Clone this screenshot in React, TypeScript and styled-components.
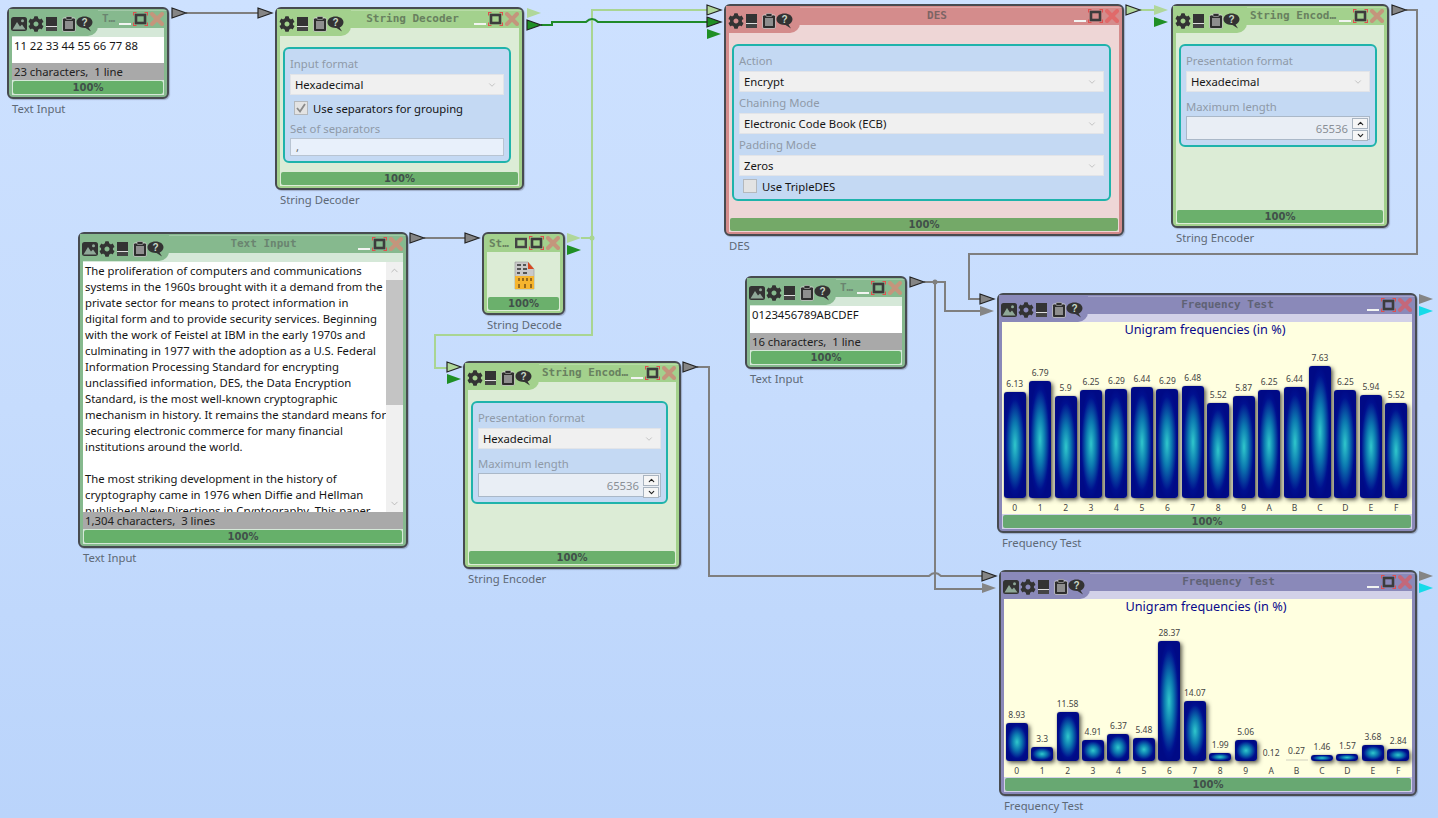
import React from 'react';
import styled, { createGlobalStyle } from 'styled-components';
import { FaCog } from 'react-icons/fa';
import { ChevronDown, ChevronUp } from 'lucide-react';

const UI = '"Noto Sans", "Open Sans", sans-serif';

const Global = createGlobalStyle`
  html, body { margin: 0; padding: 0; height: 100%; overflow: hidden; }
  body { font-family: ${UI}; font-size: 11.3px; color: #111; }
`;

type Tone = 'text' | 'codec' | 'cipher' | 'stats';
const tones: Record<Tone, { frame: string; pale: string; bar: string; title: string; close: string }> = {
  text: { frame: '#86b98e', pale: '#d5e8d8', bar: '#66b06a', title: '#6a8470', close: '#c4957c' },
  codec: { frame: '#a3d18d', pale: '#dcecd6', bar: '#6bb06c', title: '#68805f', close: '#c4957c' },
  cipher: { frame: '#d48c8c', pale: '#eed6d6', bar: '#74a968', title: '#7d6464', close: '#e06a6a' },
  stats: { frame: '#8a89b9', pale: '#d2d1e8', bar: '#68a872', title: '#5f6275', close: '#c4687a' },
};

const Canvas = styled.div`
  position: relative;
  width: 1438px;
  height: 818px;
  overflow: hidden;
  background: linear-gradient(180deg, #cde1ff 0%, #c6dcfd 50%, #bad4fb 100%);
`;
const Wires = styled.svg`
  position: absolute;
  left: 0;
  top: 0;
  width: 1438px;
  height: 818px;
`;
const NodeWrap = styled.div<{ $x: number; $y: number; $w: number }>`
  position: absolute;
  left: ${p => p.$x}px;
  top: ${p => p.$y}px;
  width: ${p => p.$w}px;
  display: flex;
  flex-direction: column;
`;
const Win = styled.div<{ $h: number; $tone: Tone }>`
  box-sizing: border-box;
  height: ${p => p.$h}px;
  border: 2px solid #474b50;
  border-radius: 6px;
  background: ${p => tones[p.$tone].frame};
  display: flex;
  flex-direction: column;
  padding-bottom: 2px;
  box-shadow: 1px 1px 1px rgba(60, 60, 80, 0.3);
`;
const NodeLabel = styled.div`
  margin: 2px 0 0 5px;
  height: 16px;
  line-height: 16px;
  color: #5e6976;
  white-space: nowrap;
`;
const Header = styled.div`
  display: flex;
  height: 27px;
  flex: none;
`;
const Tab = styled.div<{ $tone: Tone; $w: number }>`
  box-sizing: border-box;
  width: ${p => p.$w}px;
  height: 27px;
  flex: none;
  display: flex;
  align-items: center;
  padding: 3px 0 0 2px;
  background: ${p => tones[p.$tone].frame};
  border-bottom-right-radius: 10px;
  position: relative;
  z-index: 1;
`;
const IconGap = styled.span<{ $w: number }>`
  width: ${p => p.$w}px;
  flex: none;
`;
const HeaderRest = styled.div`
  flex: 1;
  min-width: 0;
  display: flex;
  flex-direction: column;
`;
const TitleBar = styled.div`
  height: 19px;
  flex: none;
  display: flex;
  align-items: center;
  padding-right: 3px;
  background: linear-gradient(180deg, transparent 1px, rgba(255, 255, 255, 0.22) 1px, rgba(255, 255, 255, 0.22) 2px, transparent 2px);
`;
const Band = styled.div<{ $tone: Tone }>`
  height: 8px;
  margin: 0 3px 0 -12px;
  background: ${p => tones[p.$tone].pale};
`;
const Title = styled.div<{ $tone: Tone }>`
  flex: 1;
  min-width: 0;
  text-align: center;
  font: bold 11px "DejaVu Sans Mono", monospace;
  color: ${p => tones[p.$tone].title};
  white-space: nowrap;
`;
const WinButtons = styled.div`
  display: flex;
  align-items: center;
  gap: 2px;
  flex: none;
`;
const Body = styled.div<{ $tone: Tone }>`
  flex: 1;
  min-height: 0;
  margin: 0 3px;
  background: ${p => tones[p.$tone].pale};
  display: flex;
  flex-direction: column;
`;
const Footer = styled.div`
  flex: none;
  padding: 1px;
`;
const Spacer = styled.div`
  flex: 1;
`;
const Progress = styled.div<{ $tone: Tone }>`
  height: 13px;
  border-radius: 2px;
  background: ${p => tones[p.$tone].bar};
  text-align: center;
  font: bold 10px/13px "DejaVu Sans", sans-serif;
  color: #41504a;
`;
const Panel = styled.div<{ $w: number }>`
  box-sizing: border-box;
  width: ${p => p.$w}px;
  margin: 11px 0 0 3px;
  border: 2px solid #1fb3ab;
  border-radius: 6px;
  background: #c4d9f3;
  padding: 7px 5px 5px;
`;
const FieldLabel = styled.div<{ $gap?: number }>`
  height: 16px;
  line-height: 16px;
  margin-top: ${p => p.$gap ?? 0}px;
  color: #8f9aa8;
  white-space: nowrap;
`;
const Select = styled.div`
  box-sizing: border-box;
  height: 21px;
  margin-top: 2px;
  display: flex;
  align-items: center;
  justify-content: space-between;
  padding: 0 6px 0 4px;
  background: #f0f0f0;
  border: 1px solid #e2e4e8;
  color: #151515;
  svg { color: #a8a8a8; }
`;
const CheckRow = styled.div<{ $gap: number }>`
  display: flex;
  align-items: center;
  gap: 5px;
  height: 16px;
  margin-top: ${p => p.$gap}px;
  padding-left: 4px;
  color: #151515;
  white-space: nowrap;
`;
const CheckBox = styled.div`
  box-sizing: border-box;
  width: 14px;
  height: 14px;
  flex: none;
  background: #e3e3e3;
  border: 1px solid #b4b8bc;
  display: flex;
  align-items: center;
  justify-content: center;
`;
const SepInput = styled.div`
  box-sizing: border-box;
  height: 18px;
  margin-top: 1px;
  padding: 0 5px;
  line-height: 16px;
  background: #e8f0fb;
  border: 1px solid #b8c4d2;
  color: #666;
`;
const NumberField = styled.div`
  box-sizing: border-box;
  height: 24px;
  margin-top: 1px;
  display: flex;
  align-items: center;
  justify-content: flex-end;
  gap: 4px;
  padding-right: 1px;
  background: #e9eef5;
  border: 1px solid #aab8c8;
  color: #8a8f96;
`;
const Spinner = styled.div`
  width: 16px;
  height: 20px;
  display: flex;
  flex-direction: column;
  gap: 1px;
`;
const SpinButton = styled.div`
  flex: 1;
  background: #f6f6f6;
  border: 1px solid #a9b4c0;
  display: flex;
  align-items: center;
  justify-content: center;
  color: #222;
`;
const TextBox = styled.div`
  box-sizing: border-box;
  flex: 1;
  min-height: 0;
  margin-top: 1px;
  background: #fff;
  display: flex;
  overflow: hidden;
`;
const TextLines = styled.div`
  flex: 1;
  min-width: 0;
  padding: 1px 2px 0;
  line-height: 16px;
  white-space: pre;
  color: #151515;
  overflow: hidden;
`;
const ScrollBar = styled.div`
  width: 17px;
  flex: none;
  background: #f0f0f0;
  display: flex;
  flex-direction: column;
  align-items: stretch;
  justify-content: space-between;
`;
const ScrollEnd = styled.div`
  height: 17px;
  display: flex;
  align-items: center;
  justify-content: center;
  color: #a4a4a4;
`;
const ScrollThumb = styled.div`
  height: 125px;
  background: #c4c4c4;
  margin-bottom: 90px;
`;
const Status = styled.div`
  flex: none;
  height: 17px;
  line-height: 17px;
  padding: 0 2px;
  background: #a9a9a9;
  color: #222;
  white-space: pre;
`;
const MiniHeader = styled.div`
  display: flex;
  align-items: center;
  height: 18px;
  padding: 0 3px 0 5px;
  flex: none;
`;
const MiniTitle = styled.div<{ $tone: Tone }>`
  flex: 1;
  font: bold 11px "DejaVu Sans Mono", monospace;
  color: ${p => tones[p.$tone].title};
`;
const MiniBody = styled.div`
  flex: 1;
  display: flex;
  align-items: center;
  justify-content: center;
  padding-top: 3px;
`;
const ChartArea = styled.div`
  flex: 1;
  min-height: 0;
  background: #ffffe0;
  display: flex;
  flex-direction: column;
`;
const ChartTitle = styled.div`
  height: 16px;
  line-height: 16px;
  margin-top: -1px;
  padding: 0 4px 0 0;
  text-align: center;
  font-size: 12.7px;
  color: #0a0a8c;
`;
const Bars = styled.div`
  flex: 1;
  min-height: 0;
  display: grid;
  grid-template-columns: repeat(16, 25.45px);
`;
const BarCol = styled.div`
  display: flex;
  flex-direction: column;
  justify-content: flex-end;
  align-items: center;
  min-width: 0;
`;
const BarValue = styled.div`
  font-size: 8.5px;
  line-height: 12px;
  margin-bottom: 2px;
  color: #444;
`;
const BarShape = styled.div`
  box-sizing: border-box;
  width: 22px;
  border-radius: 3px;
  background: radial-gradient(closest-side, #30c8cc 0%, #0c7ab0 42%, #00108f 86%, #000a86 100%);
  box-shadow: 2px 2px 4px rgba(50, 50, 40, 0.8), 0 0 1px #666;
`;
const FlatBar = styled.div`
  width: 22px;
  height: 2px;
  background: rgba(210, 210, 190, 0.5);
`;
const BarKey = styled.div`
  height: 12px;
  line-height: 12px;
  margin-top: 4px;
  font-size: 8.5px;
  color: #444;
`;

const Picture = () => (
  <svg width="16" height="14" viewBox="0 0 16 14">
    <rect x="0" y="0" width="16" height="14" rx="2.5" fill="#333" />
    <path d="M1.5 12.5 L6 5 L9 9.5 L11 7.5 L14.5 12.5 Z" fill="#8fa898" />
    <circle cx="11.5" cy="3.8" r="1.5" fill="#8fa898" />
  </svg>
);
const Minimize = () => (
  <svg width="11" height="14" viewBox="0 0 11 14">
    <rect x="0" y="0" width="11" height="9" fill="#333" />
    <rect x="0" y="9" width="11" height="1" fill="#ddd" />
    <rect x="0" y="10" width="11" height="4" fill="#444" />
  </svg>
);
const Clipboard = () => (
  <svg width="14" height="16" viewBox="0 0 14 16">
    <rect x="0.5" y="2" width="13" height="13.5" rx="1.5" fill="#2e2e2e" stroke="#eee" strokeWidth="0.6" />
    <rect x="4" y="0.5" width="6" height="3" rx="1" fill="#2e2e2e" stroke="#ddd" strokeWidth="0.5" />
    <path d="M3 6 H11 M3 8 H11 M3 10 H11 M3 12 H11" stroke="#eee" strokeWidth="1" />
  </svg>
);
const Bubble = () => (
  <svg width="17" height="16" viewBox="0 0 17 16">
    <path d="M8.5 0.5 C13 0.5 16.5 2.8 16.5 6.3 C16.5 9 14.6 10.8 12.6 11.5 L15 15.5 L9.5 12 C4 12.2 0.5 9.8 0.5 6.3 C0.5 2.8 4 0.5 8.5 0.5 Z" fill="#333" />
    <text x="8.5" y="10" fontSize="10" fontWeight="bold" textAnchor="middle" fill="#c8d8c8" fontFamily="'Liberation Sans', sans-serif">?</text>
  </svg>
);
const MinLine = () => (
  <svg width="12" height="14" viewBox="0 0 12 14">
    <rect x="0" y="11" width="12" height="2" fill="#f2f4f2" />
  </svg>
);
const Restore = () => (
  <svg width="12" height="14" viewBox="0 0 12 14">
    <rect x="1.2" y="3" width="9.6" height="8" fill="none" stroke="#444" strokeWidth="2.4" />
  </svg>
);
const Maximize = () => (
  <svg width="15" height="14" viewBox="0 0 15 14">
    <rect x="3" y="3" width="9" height="8" fill="none" stroke="#3c3c3c" strokeWidth="2.6" />
    <path d="M0.5 3.5 V0.5 H3.5 M11.5 0.5 H14.5 V3.5 M14.5 10.5 V13.5 H11.5 M3.5 13.5 H0.5 V10.5" fill="none" stroke="#e0504f" strokeWidth="1.1" />
  </svg>
);
const Close = ({ color }: { color: string }) => (
  <svg width="14" height="14" viewBox="0 0 14 14">
    <path d="M2 2 L12 12 M12 2 L2 12" stroke={color} strokeWidth="4" strokeLinecap="round" />
  </svg>
);
const CheckMark = () => (
  <svg width="10" height="10" viewBox="0 0 10 10">
    <path d="M1 5 L4 8.5 L9 1" fill="none" stroke="#8a8a8a" strokeWidth="1.8" />
  </svg>
);
const BinaryFile = () => (
  <svg width="22" height="30" viewBox="0 0 22 30">
    <path d="M2 1 H15 L21 8 V28 H2 Z" fill="#c9c9c9" stroke="#999" strokeWidth="0.6" />
    <path d="M15 1 L21 8 H15 Z" fill="#d84a20" />
    <path d="M4 4 H8 M10 4 H13 M4 8 H8 M10 8 H14 M4 12 H7 M10 12 H14" stroke="#555" strokeWidth="2" />
    <rect x="2" y="15" width="19" height="13" fill="#f6b52e" />
    <path d="M6 17 V20 M10 17 V20 M14 17 V20 M18 17 V20 M6 23 V27 M12 23 V27 M18 23 V27" stroke="#5a3a10" strokeWidth="1.2" />
  </svg>
);

const TabIcons = ({ pic }: { pic?: boolean }) => (
  <>
    {pic && <Picture />}
    {pic && <IconGap $w={1} />}
    <FaCog size={16} color="#333" />
    <IconGap $w={2} />
    <Minimize />
    <IconGap $w={5} />
    <Clipboard />
    <Bubble />
  </>
);

type NodeProps = {
  x: number; y: number; w: number; h: number; tone: Tone; title: string; label: string; pic?: boolean; children: React.ReactNode;
};
const Node = ({ x, y, w, h, tone, title, label, pic, children }: NodeProps) => (
  <NodeWrap $x={x} $y={y} $w={w}>
    <Win $h={h} $tone={tone}>
      <Header>
        <Tab $tone={tone} $w={pic ? 89 : 74}><TabIcons pic={pic} /></Tab>
        <HeaderRest>
          <TitleBar>
            <Title $tone={tone}>{title}</Title>
            <WinButtons>
              <MinLine /><Maximize /><Close color={tones[tone].close} />
            </WinButtons>
          </TitleBar>
          <Band $tone={tone} />
        </HeaderRest>
      </Header>
      <Body $tone={tone}>
        {children}
        <Footer><Progress $tone={tone}>100%</Progress></Footer>
      </Body>
    </Win>
    <NodeLabel>{label}</NodeLabel>
  </NodeWrap>
);

const Dropdown = ({ value }: { value: string }) => (
  <Select>{value}<ChevronDown size={10} strokeWidth={1.5} /></Select>
);

const EncoderPanel = ({ w }: { w: number }) => (
  <Panel $w={w}>
    <FieldLabel>Presentation format</FieldLabel>
    <Dropdown value="Hexadecimal" />
    <FieldLabel $gap={7}>Maximum length</FieldLabel>
    <NumberField>
      65536
      <Spinner>
        <SpinButton><ChevronUp size={9} strokeWidth={3} /></SpinButton>
        <SpinButton><ChevronDown size={9} strokeWidth={3} /></SpinButton>
      </Spinner>
    </NumberField>
  </Panel>
);

const ChartBars = ({ data, scale }: { data: [string, number][]; scale: number }) => (
  <Bars>
    {data.map(([k, v], i) => {
      const height = Math.max(v * scale, 6);
      return (
        <BarCol key={i}>
          <BarValue>{v}</BarValue>
          {v < 0.5 ? (v > 0.2 ? <FlatBar /> : null) : <BarShape style={{ height }} />}
          <BarKey>{k}</BarKey>
        </BarCol>
      );
    })}
  </Bars>
);

const keys = '0123456789ABCDEF'.split('');
const freq1: [string, number][] = [6.13, 6.79, 5.9, 6.25, 6.29, 6.44, 6.29, 6.48, 5.52, 5.87, 6.25, 6.44, 7.63, 6.25, 5.94, 5.52].map((v, i) => [keys[i], v]);
const freq2: [string, number][] = [8.93, 3.3, 11.58, 4.91, 6.37, 5.48, 28.37, 14.07, 1.99, 5.06, 0.12, 0.27, 1.46, 1.57, 3.68, 2.84].map((v, i) => [keys[i], v]);

const longText = `The proliferation of computers and communications
systems in the 1960s brought with it a demand from the
private sector for means to protect information in
digital form and to provide security services. Beginning
with the work of Feistel at IBM in the early 1970s and
culminating in 1977 with the adoption as a U.S. Federal
Information Processing Standard for encrypting
unclassified information, DES, the Data Encryption
Standard, is the most well-known cryptographic
mechanism in history. It remains the standard means for
securing electronic commerce for many financial
institutions around the world.

The most striking development in the history of
cryptography came in 1976 when Diffie and Hellman
published New Directions in Cryptography. This paper`;

type PinKind = 'gray' | 'light' | 'green' | 'cyan';
const pinFill: Record<PinKind, string> = { gray: '#858585', light: '#b0d79a', green: '#1f8f25', cyan: '#16dbe9' };
const Pin = ({ x, y, kind, on }: { x: number; y: number; kind: PinKind; on?: boolean }) => (
  <polygon
    points={`${x},${y - 5} ${x + 14},${y} ${x},${y + 5}`}
    fill={pinFill[kind]}
    stroke={on ? '#222' : 'none'}
    strokeWidth="1.2"
  />
);

const GRAY = '#7f7f7f';
const LIGHT = '#a9d592';
const GREEN = '#1f8a2a';

const WireLayer = () => (
  <Wires viewBox="0 0 1438 818">
    <g fill="none" strokeWidth="2">
      <path d="M186 13 H258" stroke={GRAY} />
      <path d="M424 238 H465" stroke={GRAY} />
      <path d="M581 238 H592 M592 238 V10 H708 M592 238 V335 H435 V368 H447" stroke={LIGHT} />
      <path d="M541 25 H552 V22 H586 Q592 16 598 22 H708" stroke={GREEN} />
      <path d="M1140 10 H1154" stroke={LIGHT} />
      <path d="M1406 10 H1417 V254 H969 V299 H980" stroke={GRAY} />
      <path d="M924 282 H945 V311 H980" stroke={GRAY} />
      <path d="M935 282 V589 H982" stroke={GRAY} />
      <path d="M697 367 H709 V576 H929 Q935 570 941 576 H982" stroke={GRAY} />
    </g>
    <circle cx="592" cy="238" r="2.5" fill={LIGHT} />
    <circle cx="935" cy="282" r="2.5" fill={GRAY} />
    <Pin x={172} y={13} kind="gray" on />
    <Pin x={258} y={13} kind="gray" on />
    <Pin x={527} y={13} kind="light" />
    <Pin x={527} y={25} kind="green" on />
    <Pin x={707} y={10} kind="light" on />
    <Pin x={707} y={22} kind="green" on />
    <Pin x={707} y={34} kind="green" />
    <Pin x={1126} y={10} kind="light" on />
    <Pin x={1154} y={10} kind="light" />
    <Pin x={1154} y={22} kind="green" />
    <Pin x={1392} y={10} kind="gray" on />
    <Pin x={410} y={238} kind="gray" on />
    <Pin x={465} y={238} kind="gray" on />
    <Pin x={567} y={238} kind="light" />
    <Pin x={567} y={250} kind="green" />
    <Pin x={447} y={367} kind="light" on />
    <Pin x={447} y={379} kind="green" />
    <Pin x={683} y={367} kind="gray" on />
    <Pin x={910} y={282} kind="gray" on />
    <Pin x={980} y={299} kind="gray" on />
    <Pin x={980} y={311} kind="gray" />
    <Pin x={1419} y={299} kind="gray" />
    <Pin x={1419} y={311} kind="cyan" />
    <Pin x={982} y={576} kind="gray" on />
    <Pin x={982} y={588} kind="gray" />
    <Pin x={1419} y={576} kind="gray" />
    <Pin x={1419} y={588} kind="cyan" />
  </Wires>
);

export default function App() {
  return (
    <Canvas>
      <Global />
      <WireLayer />

      <Node x={7} y={7} w={162} h={92} tone="text" title="T…" label="Text Input" pic>
        <TextBox><TextLines>11 22 33 44 55 66 77 88</TextLines></TextBox>
        <Status>{'23 characters,  1 line'}</Status>
      </Node>

      <Node x={275} y={7} w={249} h={183} tone="codec" title="String Decoder" label="String Decoder">
        <Panel $w={228}>
          <FieldLabel>Input format</FieldLabel>
          <Dropdown value="Hexadecimal" />
          <CheckRow $gap={5}>
            <CheckBox><CheckMark /></CheckBox>
            Use separators for grouping
          </CheckRow>
          <FieldLabel $gap={5}>Set of separators</FieldLabel>
          <SepInput>,</SepInput>
        </Panel>
        <Spacer />
      </Node>

      <Node x={724} y={4} w={400} h={232} tone="cipher" title="DES" label="DES">
        <Panel $w={379}>
          <FieldLabel>Action</FieldLabel>
          <Dropdown value="Encrypt" />
          <FieldLabel $gap={3}>Chaining Mode</FieldLabel>
          <Dropdown value="Electronic Code Book (ECB)" />
          <FieldLabel $gap={3}>Padding Mode</FieldLabel>
          <Dropdown value="Zeros" />
          <CheckRow $gap={2}>
            <CheckBox />
            Use TripleDES
          </CheckRow>
        </Panel>
        <Spacer />
      </Node>

      <Node x={1171} y={4} w={218} h={224} tone="codec" title="String Encod…" label="String Encoder">
        <EncoderPanel w={198} />
        <Spacer />
      </Node>

      <Node x={78} y={232} w={330} h={316} tone="text" title="Text Input" label="Text Input" pic>
        <TextBox>
          <TextLines>{longText}</TextLines>
          <ScrollBar>
            <ScrollEnd><ChevronUp size={11} strokeWidth={1.5} /></ScrollEnd>
            <ScrollThumb />
            <ScrollEnd><ChevronDown size={11} strokeWidth={1.5} /></ScrollEnd>
          </ScrollBar>
        </TextBox>
        <Status>{'1,304 characters,  3 lines'}</Status>
      </Node>

      <NodeWrap $x={482} $y={232} $w={83}>
        <Win $h={83} $tone="codec">
          <MiniHeader>
            <MiniTitle $tone="codec">St…</MiniTitle>
            <WinButtons>
              <Restore /><Maximize /><Close color={tones.codec.close} />
            </WinButtons>
          </MiniHeader>
          <Body $tone="codec">
            <MiniBody><BinaryFile /></MiniBody>
            <Footer><Progress $tone="codec">100%</Progress></Footer>
          </Body>
        </Win>
        <NodeLabel>String Decode</NodeLabel>
      </NodeWrap>

      <Node x={463} y={361} w={218} h={208} tone="codec" title="String Encod…" label="String Encoder">
        <EncoderPanel w={197} />
        <Spacer />
      </Node>

      <Node x={745} y={276} w={162} h={93} tone="text" title="T…" label="Text Input" pic>
        <TextBox><TextLines>0123456789ABCDEF</TextLines></TextBox>
        <Status>{'16 characters,  1 line'}</Status>
      </Node>

      <Node x={997} y={293} w={420} h={240} tone="stats" title="Frequency Test" label="Frequency Test" pic>
        <ChartArea>
          <ChartTitle>Unigram frequencies (in %)</ChartTitle>
          <ChartBars data={freq1} scale={17.3} />
        </ChartArea>
      </Node>

      <Node x={999} y={570} w={418} h={226} tone="stats" title="Frequency Test" label="Frequency Test" pic>
        <ChartArea>
          <ChartTitle>Unigram frequencies (in %)</ChartTitle>
          <ChartBars data={freq2} scale={4.23} />
        </ChartArea>
      </Node>
    </Canvas>
  );
}
